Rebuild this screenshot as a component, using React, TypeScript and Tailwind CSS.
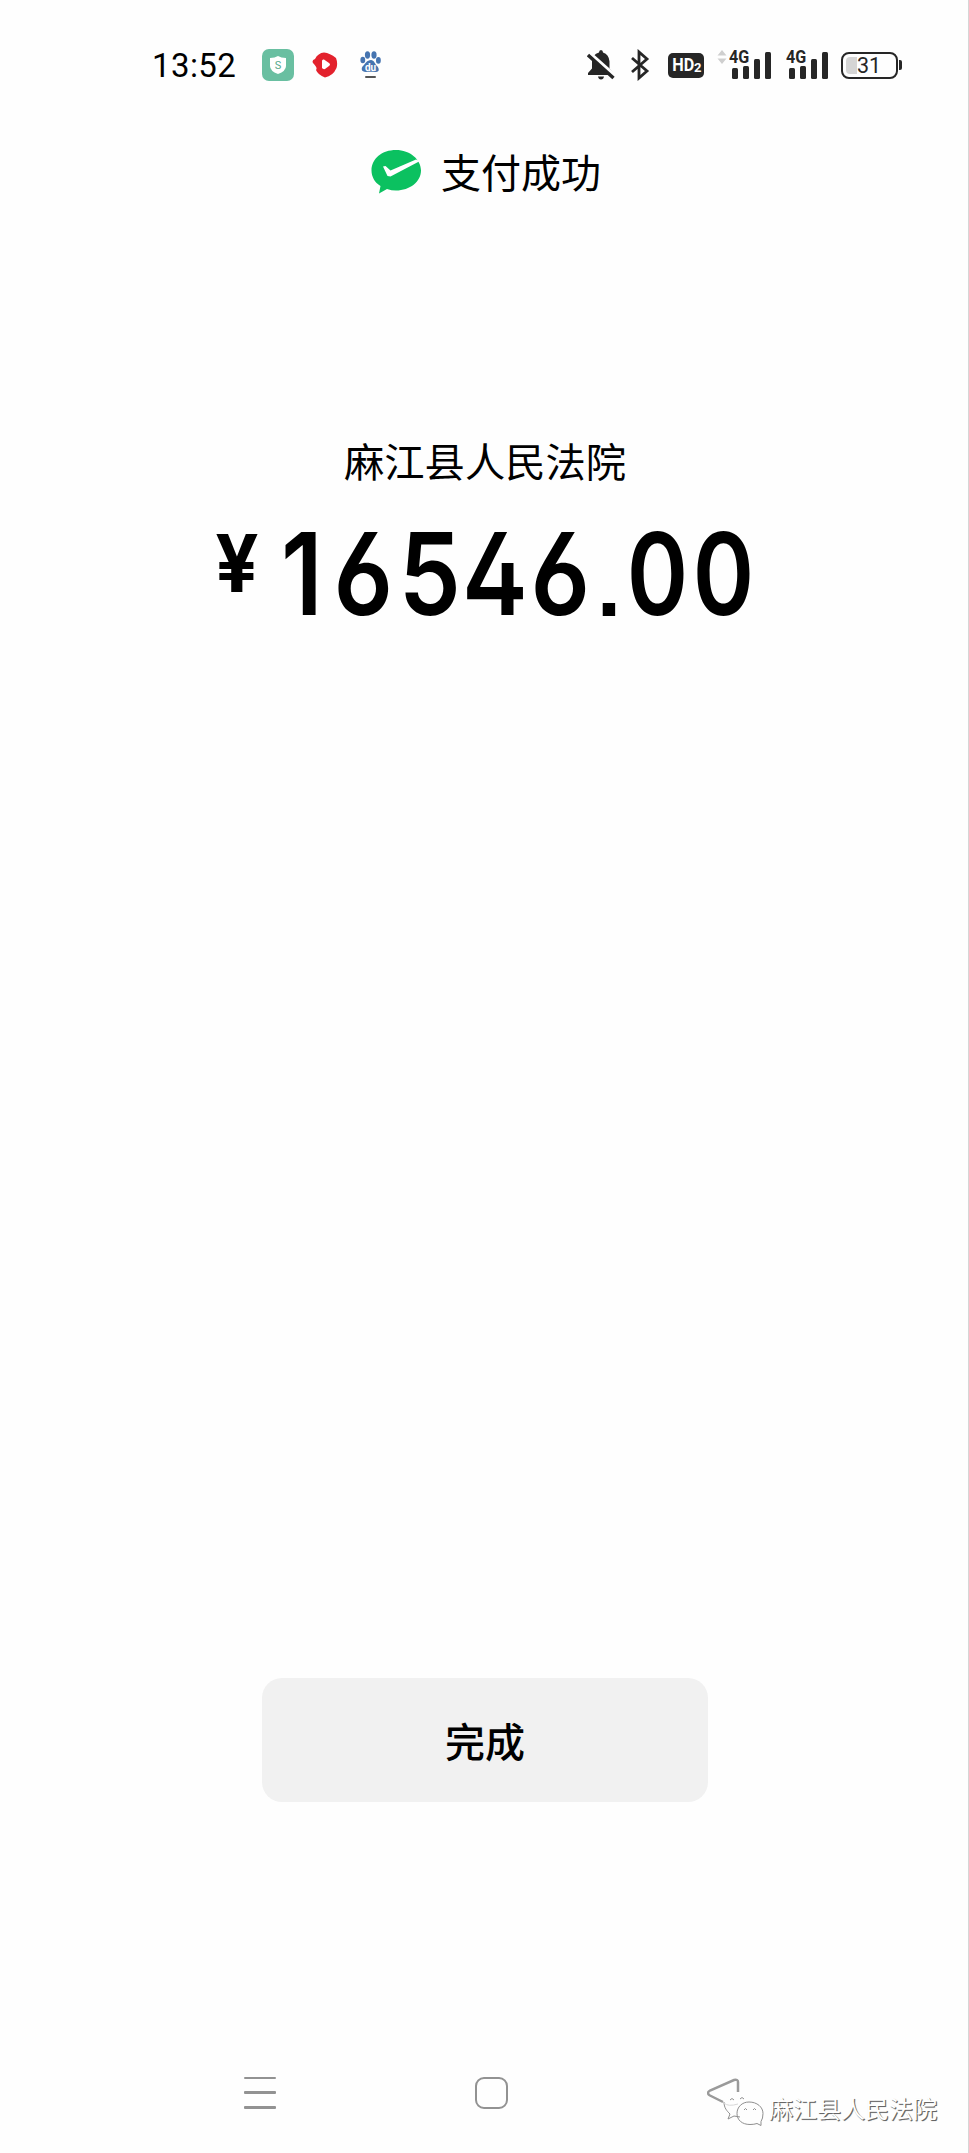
import React from 'react';

const cjk = "font-['Noto_Sans_CJK_SC',sans-serif]";

const amount = ['1', '6', '5', '4', '6', '.', '0', '0'];

const digitCell = (ch: string): string => {
  if (ch === '.') return 'flex w-[31px] justify-center pt-[12px]';
  if (ch === '1') return 'flex w-[65.700px] justify-center pl-[8px]';
  return 'flex w-[65.700px] justify-center';
};

const digitText = (ch: string): string => {
  if (ch === '.') return "font-['Liberation_Sans',sans-serif] text-[88px] font-bold";
  if (ch === '0') return 'scale-x-[0.82]';
  return "scale-x-[0.87] [font-feature-settings:'cv03','ss01']";
};

const SignalBars: React.FC = () => (
  <div className="relative h-[30px] w-[44px]">
    <span className="absolute top-0 left-0 origin-left scale-x-[0.87] font-['Roboto',sans-serif] text-[18.500px] leading-[15px] font-bold text-[#262626]">
      4G
    </span>
    <svg className="block" width="44" height="30" viewBox="0 0 44 30" fill="#262626">
      <rect x="3" y="18" width="6" height="11" rx="1.5" />
      <rect x="14" y="16" width="6" height="13" rx="1.5" />
      <rect x="25" y="9" width="6" height="20" rx="1.5" />
      <rect x="36" y="2" width="6" height="27" rx="1.5" />
    </svg>
  </div>
);

const StatusBar: React.FC = () => (
  <div className="flex h-[60px] items-center pl-[152px]">
    <span className="w-[110px] pt-[1px] font-['Roboto',sans-serif] text-[33px] leading-[40px] tracking-[0.4px] text-black">
      13:52
    </span>

    <svg width="32" height="32" viewBox="0 0 32 32">
      <rect width="32" height="32" rx="7" fill="#69bfa1" />
      <path d="M8 9q5 0 8-2q3 2 8 2v8q0 5-8 8q-8-3-8-8z" fill="#fff" />
      <text x="16" y="20" textAnchor="middle" fontFamily="Roboto" fontSize="11" fill="#55a98b">S</text>
    </svg>
    <svg className="ml-[18px]" width="26" height="26" viewBox="0 0 26 26">
      <path d="M1 11Q-.5 8 3 7Q6 1 12 .5Q18 1 24 6Q26 11 24.500 16Q21 24 13 25.500Q6 23 4 18Q6 16 1 11z" fill="#e3222d" />
      <path d="M10 9q0-2 2-1.500l5 3.500q2 1.500 0 3l-4 3q-2 .5-3-1z" fill="#fff" />
    </svg>
    <svg className="ml-[22px]" width="22" height="28" viewBox="0 0 22 28">
      <g fill="#4674b0">
        <ellipse cx="7.5" cy="4" rx="2.6" ry="3.7" />
        <ellipse cx="14" cy="4" rx="2.6" ry="3.7" />
        <ellipse cx="2.8" cy="9" rx="2.4" ry="3.3" />
        <ellipse cx="18.4" cy="9.4" rx="2.4" ry="3.3" />
        <path d="M11 9c3 0 4 4 6 6s3 6-1 6c-3 0-7-.5-10 0c-5 0-5-4-3-6s4-6 8-6z" />
      </g>
      <text x="10.5" y="19.5" textAnchor="middle" fontFamily="Roboto" fontWeight="700" fontSize="10" fill="#fff">du</text>
      <rect x="5" y="25" width="11" height="2" rx="1" fill="#555" />
    </svg>

    <svg className="ml-[205px]" width="28" height="32" viewBox="0 0 28 32">
      <path d="M14 1q2 0 2 2.500q6 2 6.500 9v7l4 4.500v2H1v-2l4-4.500v-7Q5.300 5.500 12 3.500Q12 1 14 1z" fill="#262626" />
      <path d="M11 27.500h6q-.5 3-3 3t-3-3z" fill="#262626" />
      <path d="M1 3l27 24" stroke="#fff" strokeWidth="4" />
      <path d="M1 6l25.500 23" stroke="#262626" strokeWidth="3.400" />
    </svg>
    <svg className="ml-[15px]" width="20" height="32" viewBox="0 0 20 32">
      <path d="M2 9l15 13l-8 7V3l8 7L2 23" fill="none" stroke="#262626" strokeWidth="2.800" />
    </svg>
    <div className="ml-[18px] flex h-[25px] w-[36px] items-center justify-center rounded-[5px] bg-[#262626] font-['Roboto',sans-serif] leading-none font-bold text-white">
      <span className="origin-center scale-x-90 text-[18px]">HD</span>
      <span className="-ml-[1px] pt-[4px] text-[13px]">2</span>
    </div>
    <svg className="-mt-[17px] ml-[13px]" width="10" height="14" viewBox="0 0 10 14" fill="#cfcfcf">
      <path d="M5 0l4.500 5.500h-9zM5 14l4.500-5.500h-9z" />
    </svg>
    <div className="ml-[2px]">
      <SignalBars />
    </div>
    <div className="ml-[13px]">
      <SignalBars />
    </div>
    <div className="ml-[11px] flex items-center">
      <div className="relative h-[27px] w-[57px] rounded-[8px] border-2 border-[#262626] p-[3px]">
        <div className="h-full w-[11px] rounded-l-[4px] bg-[#d5d5d5]" />
        <span className="absolute inset-0 pr-[1px] text-center font-['Roboto',sans-serif] text-[21.500px] leading-[24px] text-[#262626]">
          31
        </span>
      </div>
      <div className="ml-[1px] h-[10px] w-[3px] rounded-r-[2px] bg-[#262626]" />
    </div>
  </div>
);

const PayHeader: React.FC = () => (
  <div className="mt-[51px] flex h-[50px] items-center pl-[371px]">
    <svg className="mt-[1px]" width="51" height="46" viewBox="0 0 51 46">
      <path d="M25 1C11 1 .5 9.500 .5 21.500c0 6 3 12 9 15.500L8 44.500l8-4.500c3 1 6 1.500 9 1.500c14 0 25-9 25-20S39 1 25 1z" fill="#0bc160" />
      <path d="M12 17.500l2.500-.5l5 4.500l25.500-11l4 1.500L19.500 27.500l-3-.5z" fill="#fff" />
    </svg>
    <span className={`${cjk} ml-[19px] text-[40px] leading-[48px] text-black`}>支付成功</span>
  </div>
);

const Amount: React.FC = () => (
  <div className="mt-[29px] flex h-[120px] items-start pl-[204px] font-['Inter',sans-serif] text-black">
    <div className="flex w-[66px] justify-center pt-[9px] text-[80px] leading-[80px] font-bold">
      <span className="scale-x-[0.95]">¥</span>
    </div>
    <div className="ml-[-5px] flex text-[113.500px] leading-[120px] font-semibold">
      {amount.map((ch, i) => (
        <div key={i} className={digitCell(ch)}>
          <span className={digitText(ch)}>{ch}</span>
        </div>
      ))}
    </div>
  </div>
);

const NavBar: React.FC = () => (
  <div className="mt-[274px] flex items-start pl-[244px]">
    <svg className="mt-[1px]" width="32" height="34" viewBox="0 0 32 34" fill="#929292">
      <rect y="0" width="32" height="2" rx="1" />
      <rect y="14" width="32" height="3" rx="1" />
      <rect y="29" width="32" height="3" rx="1" />
    </svg>
    <div className="mt-[1px] ml-[199px] h-[32px] w-[33px] rounded-[9px] border-[2.500px] border-[#929292]" />
    <svg className="ml-[199px]" width="58" height="52" viewBox="0 0 58 52" fill="none">
      <path d="M31 16V6q0-3-4-2L3 14.500q-4 2.500 0 5L16 26" stroke="#9a9a9a" strokeWidth="2.500" />
      <g stroke="#8f8f8f" strokeWidth="1" transform="translate(-1 0)">
        <path d="M18 26c0 6 3 9 6 12l-2 5l6-3l6 1" />
        <path d="M18 27q4 4 14 1" stroke="#d8d8d8" />
        <path d="M43 26c-7 0-12 5-12 11.500s5 11 13 11q4 0 7-1l4 2v-4q2-3 2-8c0-6.500-6-11.500-14-11.500z" />
        <path d="M24 24q2-3 4 0M34 23q2-3 4 0M38 34q1.500-3 3 0M47 34q1.500-3 3 0" />
      </g>
    </svg>
    <span
      className={`${cjk} mt-[12px] ml-[4px] text-[24px] leading-[40px] whitespace-nowrap text-white [text-shadow:1px_1px_0_#666,1px_1px_1px_#999]`}
    >
      麻江县人民法院
    </span>
  </div>
);

const App: React.FC = () => {
  return (
    <div className="h-[2153px] w-[969px] overflow-hidden border-r border-[#d6d6d6] bg-[#fefefe] pt-[35px]">
      <StatusBar />
      <PayHeader />
      <div className={`${cjk} mt-[239px] pl-[344px] text-[40.300px] leading-[50px] text-black`}>麻江县人民法院</div>
      <Amount />
      <button
        type="button"
        className={`${cjk} mt-[1044px] ml-[262px] flex h-[124px] w-[446px] items-center justify-center rounded-[20px] bg-[#f1f1f1] text-[40px] leading-[50px] font-medium text-black`}
      >
        完成
      </button>
      <NavBar />
    </div>
  );
};

export default App;
